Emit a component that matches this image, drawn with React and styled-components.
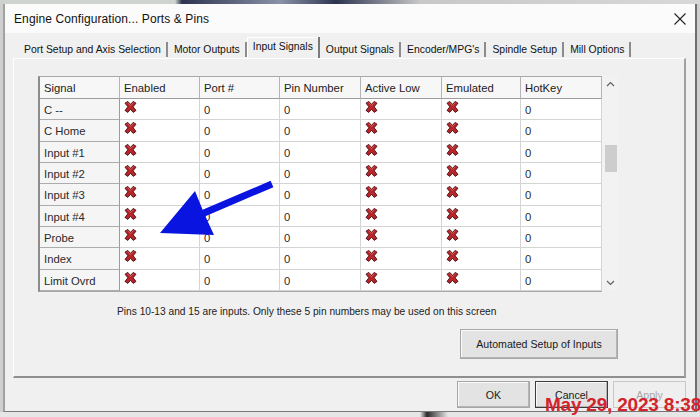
import React from "react";
import styled, { createGlobalStyle } from "styled-components";

const GlobalStyle = createGlobalStyle`
  html, body {
    margin: 0;
    padding: 0;
    background: #3c3c3c;
  }
  body {
    font-family: "Liberation Sans", Arial, sans-serif;
    font-size: 11px;
    color: #222;
  }
`;

const Page = styled.div`
  position: relative;
  width: 700px;
  height: 417px;
  overflow: hidden;
  background: #cfcfcf;
  display: flex;
  flex-direction: column;
`;

const Desktop = styled.div`
  height: 4px;
  background: linear-gradient(
    90deg,
    #cfd3cf 0%,
    #cfd3cf 25%,
    #2c3450 26%,
    #8a92a8 40%,
    #2c3450 48%,
    #c8c8c8 60%,
    #d8d8d8 100%
  );
`;

const Window = styled.div`
  margin-left: 3px;
  width: 690px;
  height: 407px;
  border-left: 2px solid #9ea39e;
  border-right: 2px solid #6d6d6d;
  border-bottom: 1px solid #777;
  background: #f0f0f0;
  display: flex;
  flex-direction: column;
`;

const BottomDesk = styled.div`
  flex: 1;
  background: linear-gradient(90deg, #e6e6e6 0%, #e6e6e6 60%, #2a2a2a 61%, #e6e6e6 64%);
`;

const TitleBar = styled.div`
  height: 29px;
  background: #fbfbfb;
  display: flex;
  align-items: center;
  justify-content: space-between;
  padding: 0 8px 0 9px;
`;

const Title = styled.span`
  font-size: 12px;
  color: #111;
  letter-spacing: 0.1px;
`;

const CloseIcon = styled.svg`
  width: 14px;
  height: 14px;
`;

const Body = styled.div`
  flex: 1;
  display: flex;
  flex-direction: column;
  padding: 7px 5px 0 8px;
`;

const TabRow = styled.div`
  height: 18px;
  display: flex;
  align-items: flex-end;
  padding-left: 5px;
`;

const Tab = styled.div`
  height: ${(p) => (p.$active ? "18px" : "15px")};
  display: flex;
  align-items: center;
  padding: 0 5px 0 6px;
  font-size: 10.4px;
  color: #111;
  white-space: nowrap;
  border-right: 2px solid ${(p) => (p.$active ? "#7a7a7a" : "#8c8c8c")};
  box-shadow: ${(p) => (p.$active ? "inset 1px 1px 0 #ffffff" : "none")};
  margin-bottom: ${(p) => (p.$active ? "0" : "1px")};
  padding-bottom: ${(p) => (p.$active ? "3px" : "0")};
`;

const Panel = styled.div`
  height: 320px;
  width: 673px;
  border-top: 1px solid #ffffff;
  border-left: 1px solid #ffffff;
  border-right: 2px solid #a0a0a0;
  border-bottom: 2px solid #8f8f8f;
  display: flex;
  flex-direction: column;
  padding: 17px 0 0 24px;
  box-sizing: border-box;
`;

const TableWrap = styled.div`
  display: flex;
  width: 580px;
`;

const Grid = styled.div`
  display: grid;
  grid-template-columns: 80px 80px 80px 81px 81px 79px 81px;
  grid-auto-rows: 21.33px;
  grid-template-rows: 22px;
  border-top: 1px solid #a9a9a9;
  border-left: 2px solid #8c8c8c;
  border-bottom: 1px solid #a9a9a9;
  background: #fff;
`;

const HeadCell = styled.div`
  background: #f7f7f7;
  border-right: 1px solid #b4b4b4;
  border-bottom: 1px solid #9c9c9c;
  display: flex;
  align-items: center;
  padding-left: 4px;
  font-size: 11.3px;
  color: #222;
`;

const Cell = styled.div`
  background: ${(p) => (p.$label ? "#f5f5f5" : "#ffffff")};
  border-right: 1px solid ${(p) => (p.$label ? "#9c9c9c" : "#d4d4d4")};
  border-bottom: 1px solid ${(p) => (p.$label ? "#adadad" : "#d4d4d4")};
  display: flex;
  align-items: ${(p) => (p.$icon ? "flex-start" : "center")};
  padding: 2px 0 0 4px;
  font-size: 11.3px;
  color: #2a2a2a;
  box-sizing: border-box;
`;

const Scroll = styled.div`
  width: 17px;
  height: 214px;
  background: #f2f2f2;
  display: flex;
  flex-direction: column;
  align-items: center;
  justify-content: space-between;
  padding: 5px 0 4px;
  box-sizing: border-box;
  position: relative;
`;

const ScrollArrow = styled.svg`
  width: 9px;
  height: 6px;
`;

const Thumb = styled.div`
  position: absolute;
  left: 3px;
  top: 69px;
  width: 12px;
  height: 27px;
  background: #cdcdcd;
`;

const Note = styled.div`
  margin-top: 14px;
  padding-left: 79px;
  font-size: 10.2px;
  color: #222;
  white-space: nowrap;
`;

const ActionRow = styled.div`
  margin-top: 12px;
  width: 580px;
  display: flex;
  justify-content: flex-end;
`;

const Button = styled.button`
  font-family: "Liberation Sans", Arial, sans-serif;
  font-size: 10.6px;
  color: ${(p) => (p.$disabled ? "#a8a8a8" : "#1a1a1a")};
  background: ${(p) => (p.$disabled ? "#efefef" : "#e3e3e3")};
  border: 1px solid ${(p) => (p.$focus ? "#3c3c3c" : p.$disabled ? "#c8c8c8" : "#a6a6a6")};
  box-shadow: ${(p) => (p.$disabled ? "none" : "inset -1px -1px 0 #b5b5b5, inset 1px 1px 0 #fafafa")};
  width: ${(p) => p.$w || 73}px;
  height: ${(p) => p.$h || 27}px;
  padding: 0;
  margin: 0;
`;

const Footer = styled.div`
  display: flex;
  justify-content: flex-end;
  gap: 5px;
  padding: 3px 4px 0 0;
`;

const Overlay = styled.svg`
  position: absolute;
  left: 0;
  top: 0;
  pointer-events: none;
`;

const Stamp = styled.div`
  position: absolute;
  right: -1px;
  bottom: 1px;
  font-family: "Liberation Sans", Arial, sans-serif;
  font-weight: bold;
  font-size: 19px;
  letter-spacing: -0.2px;
  color: #d3242e;
  white-space: nowrap;
`;

const XMark = () => (
  <svg width="13" height="12" viewBox="0 0 13 12">
    <path
      d="M1 2.2 L3.8 0.4 L6.5 3.4 L9.2 0.4 L12 2.2 L9.1 5.8 L12 9.4 L9.2 11.4 L6.5 8.3 L3.8 11.4 L1 9.4 L3.9 5.8 Z"
      fill="#b8262a"
      stroke="#4a0c0e"
      strokeWidth="0.9"
      strokeLinejoin="round"
    />
    <path d="M3.6 1.6 L6.5 4.6 L9.3 1.6" fill="none" stroke="#e46a6a" strokeWidth="0.7" />
  </svg>
);

const headers = ["Signal", "Enabled", "Port #", "Pin Number", "Active Low", "Emulated", "HotKey"];
const signals = ["C --", "C Home", "Input #1", "Input #2", "Input #3", "Input #4", "Probe", "Index", "Limit Ovrd"];
const tabs = [
  "Port Setup and Axis Selection",
  "Motor Outputs",
  "Input Signals",
  "Output Signals",
  "Encoder/MPG's",
  "Spindle Setup",
  "Mill Options",
];

export default function App() {
  return (
    <Page>
      <GlobalStyle />
      <Desktop />
      <Window>
        <TitleBar>
          <Title>Engine Configuration... Ports &amp; Pins</Title>
          <CloseIcon viewBox="0 0 14 14">
            <path d="M1.5 1.5 L12.5 12.5 M12.5 1.5 L1.5 12.5" stroke="#222" strokeWidth="1.1" />
          </CloseIcon>
        </TitleBar>
        <Body>
          <TabRow>
            {tabs.map((t) => (
              <Tab key={t} $active={t === "Input Signals"}>
                {t}
              </Tab>
            ))}
          </TabRow>
          <Panel>
            <TableWrap>
              <Grid>
                {headers.map((h) => (
                  <HeadCell key={h}>{h}</HeadCell>
                ))}
                {signals.map((s) => (
                  <React.Fragment key={s}>
                    <Cell $label>{s}</Cell>
                    <Cell $icon>
                      <XMark />
                    </Cell>
                    <Cell>0</Cell>
                    <Cell>0</Cell>
                    <Cell $icon>
                      <XMark />
                    </Cell>
                    <Cell $icon>
                      <XMark />
                    </Cell>
                    <Cell>0</Cell>
                  </React.Fragment>
                ))}
              </Grid>
              <Scroll>
                <ScrollArrow viewBox="0 0 9 6">
                  <path d="M1 5 L4.5 1.5 L8 5" fill="none" stroke="#606060" strokeWidth="1.2" />
                </ScrollArrow>
                <Thumb />
                <ScrollArrow viewBox="0 0 9 6">
                  <path d="M1 1 L4.5 4.5 L8 1" fill="none" stroke="#606060" strokeWidth="1.2" />
                </ScrollArrow>
              </Scroll>
            </TableWrap>
            <Note>Pins 10-13 and 15 are inputs. Only these 5 pin numbers may be used on this screen</Note>
            <ActionRow>
              <Button $w={158} $h={30}>
                Automated Setup of Inputs
              </Button>
            </ActionRow>
          </Panel>
          <Footer>
            <Button>OK</Button>
            <Button $focus>Cancel</Button>
            <Button $disabled>Apply</Button>
          </Footer>
        </Body>
      </Window>
      <BottomDesk />
      <Overlay width="700" height="417" viewBox="0 0 700 417">
        <polygon
          points="270.6,180.8 273.4,187.2 205.4,216.2 214,235 160,233 195,191 202.6,209.8"
          fill="#0a14e0"
        />
      </Overlay>
      <Stamp>May 29, 2023 8:38</Stamp>
    </Page>
  );
}
